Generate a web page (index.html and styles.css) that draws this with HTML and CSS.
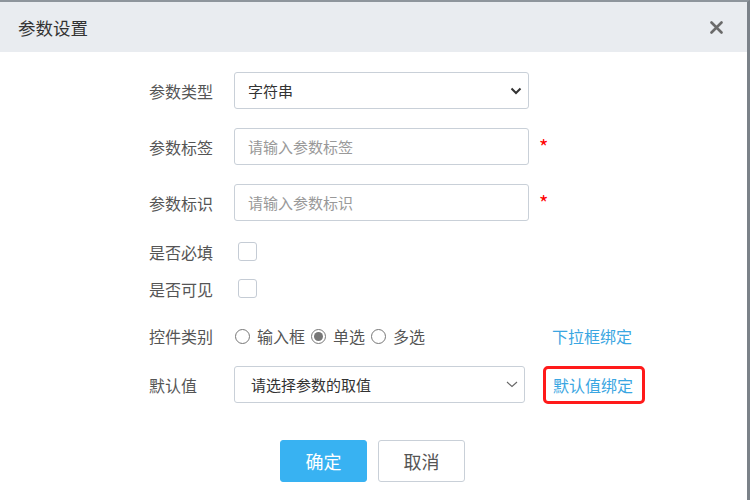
FILE: index.html
```html
<!DOCTYPE html>
<html lang="zh-CN">
<head>
    <meta charset="UTF-8">
    <title>参数设置</title>
    <link rel="stylesheet" href="styles.css">
</head>
<body>
    <div class="dialog">
        <div class="dialog-header">
            <span class="dialog-title">参数设置</span>
            <svg class="close" width="13" height="13" viewBox="0 0 13 13"><path d="M1.5 1.5 L11.5 11.5 M11.5 1.5 L1.5 11.5" stroke="#6a6a6a" stroke-width="2.6" stroke-linecap="round"/></svg>
        </div>

        <div class="dialog-body">
            <div class="row field">
                <label>参数类型</label>
                <div class="control select">
                    <span>字符串</span>
                    <svg class="arrow" width="12" height="8" viewBox="0 0 12 8"><path d="M1.5 1.5 L6 6 L10.5 1.5" fill="none" stroke="#333" stroke-width="2"/></svg>
                </div>
            </div>

            <div class="row field">
                <label>参数标签</label>
                <div class="control input"><span class="placeholder">请输入参数标签</span></div>
                <span class="required">*</span>
            </div>

            <div class="row field">
                <label>参数标识</label>
                <div class="control input"><span class="placeholder">请输入参数标识</span></div>
                <span class="required">*</span>
            </div>

            <div class="row check first">
                <label>是否必填</label>
                <span class="checkbox"></span>
            </div>

            <div class="row check">
                <label>是否可见</label>
                <span class="checkbox"></span>
            </div>

            <div class="row radios">
                <label>控件类别</label>
                <div class="radio-group">
                    <span class="radio"></span><span class="radio-text">输入框</span>
                    <span class="radio checked"></span><span class="radio-text">单选</span>
                    <span class="radio"></span><span class="radio-text">多选</span>
                </div>
                <a class="link">下拉框绑定</a>
            </div>

            <div class="row default">
                <label>默认值</label>
                <div class="control select small">
                    <span>请选择参数的取值</span>
                    <svg class="arrow" width="12" height="7" viewBox="0 0 12 7"><path d="M1 1 L6 5.5 L11 1" fill="none" stroke="#666" stroke-width="1.1"/></svg>
                </div>
                <a class="link boxed">默认值绑定</a>
            </div>

            <div class="buttons">
                <button class="btn primary">确定</button>
                <button class="btn">取消</button>
            </div>
        </div>
    </div>
</body>
</html>
```

FILE: styles.css
```css
body { margin: 0; background: #fff; font-family: "Noto Sans CJK SC", "Noto Sans", sans-serif; }
.dialog { width: 750px; height: 500px; box-sizing: border-box; border-top: 2px solid #8e959c; border-right: 3px solid #7b8289; background: #fff; }
.dialog-header { height: 50px; background: #e9ecf0; display: flex; align-items: center; justify-content: space-between; padding: 0 24px 0 18px; }
.dialog-title { font-size: 17.5px; color: #333; }
.close { margin-top: 1px; }
.dialog-body { padding: 20px 0 0 149px; }
.row { display: flex; align-items: center; }
.row label { width: 85px; font-size: 16px; color: #555; line-height: 20px; }
.field { height: 37px; margin-bottom: 19px; }
.control { box-sizing: border-box; height: 37px; border: 1px solid #c9d0d8; border-radius: 3px; display: flex; align-items: center; justify-content: space-between; padding: 0 6px 0 13px; font-size: 15px; color: #333; width: 295px; }
.placeholder { color: #999; }
.required { color: #f00; font-size: 20px; line-height: 20px; margin-left: 10px; margin-top: 1px; }
.row.check { height: 37px; }
.row.check.first { margin-top: -7px; }
.checkbox { box-sizing: border-box; width: 19px; height: 19px; border: 1px solid #c5ccd5; border-radius: 3px; margin-left: 4px; }
.radios { height: 36px; margin-top: 11px; }
.radio-group { display: flex; align-items: center; width: 318px; font-size: 16px; color: #555; }
.radio { box-sizing: border-box; width: 15px; height: 15px; border: 1px solid #777; border-radius: 50%; margin-left: 1px; margin-right: 7px; display: flex; align-items: center; justify-content: center; }
.radio.checked::after { content: ""; width: 9px; height: 9px; border-radius: 50%; background: #777; }
.radio-text { margin-right: 5px; }
.link { font-size: 16px; color: #3aa6e2; }
.default { height: 37px; margin-top: 12px; }
.control.small { width: 291px; padding: 0 6px 0 16px; }
.link.boxed { box-sizing: border-box; height: 38px; margin-left: 18px; padding: 0 9px 0 7px; border: 3px solid #ff1a1a; border-radius: 5px; display: flex; align-items: center; margin-top: 1px; }
.buttons { display: flex; gap: 11px; margin: 37px 0 0 131px; }
.btn { box-sizing: border-box; width: 87px; height: 42px; border: 1px solid #c9d0d8; border-radius: 3px; background: #fff; color: #555; font-family: inherit; font-size: 18px; padding: 0; }
.btn.primary { background: #38b2f2; border-color: #38b2f2; color: #fff; }
```
